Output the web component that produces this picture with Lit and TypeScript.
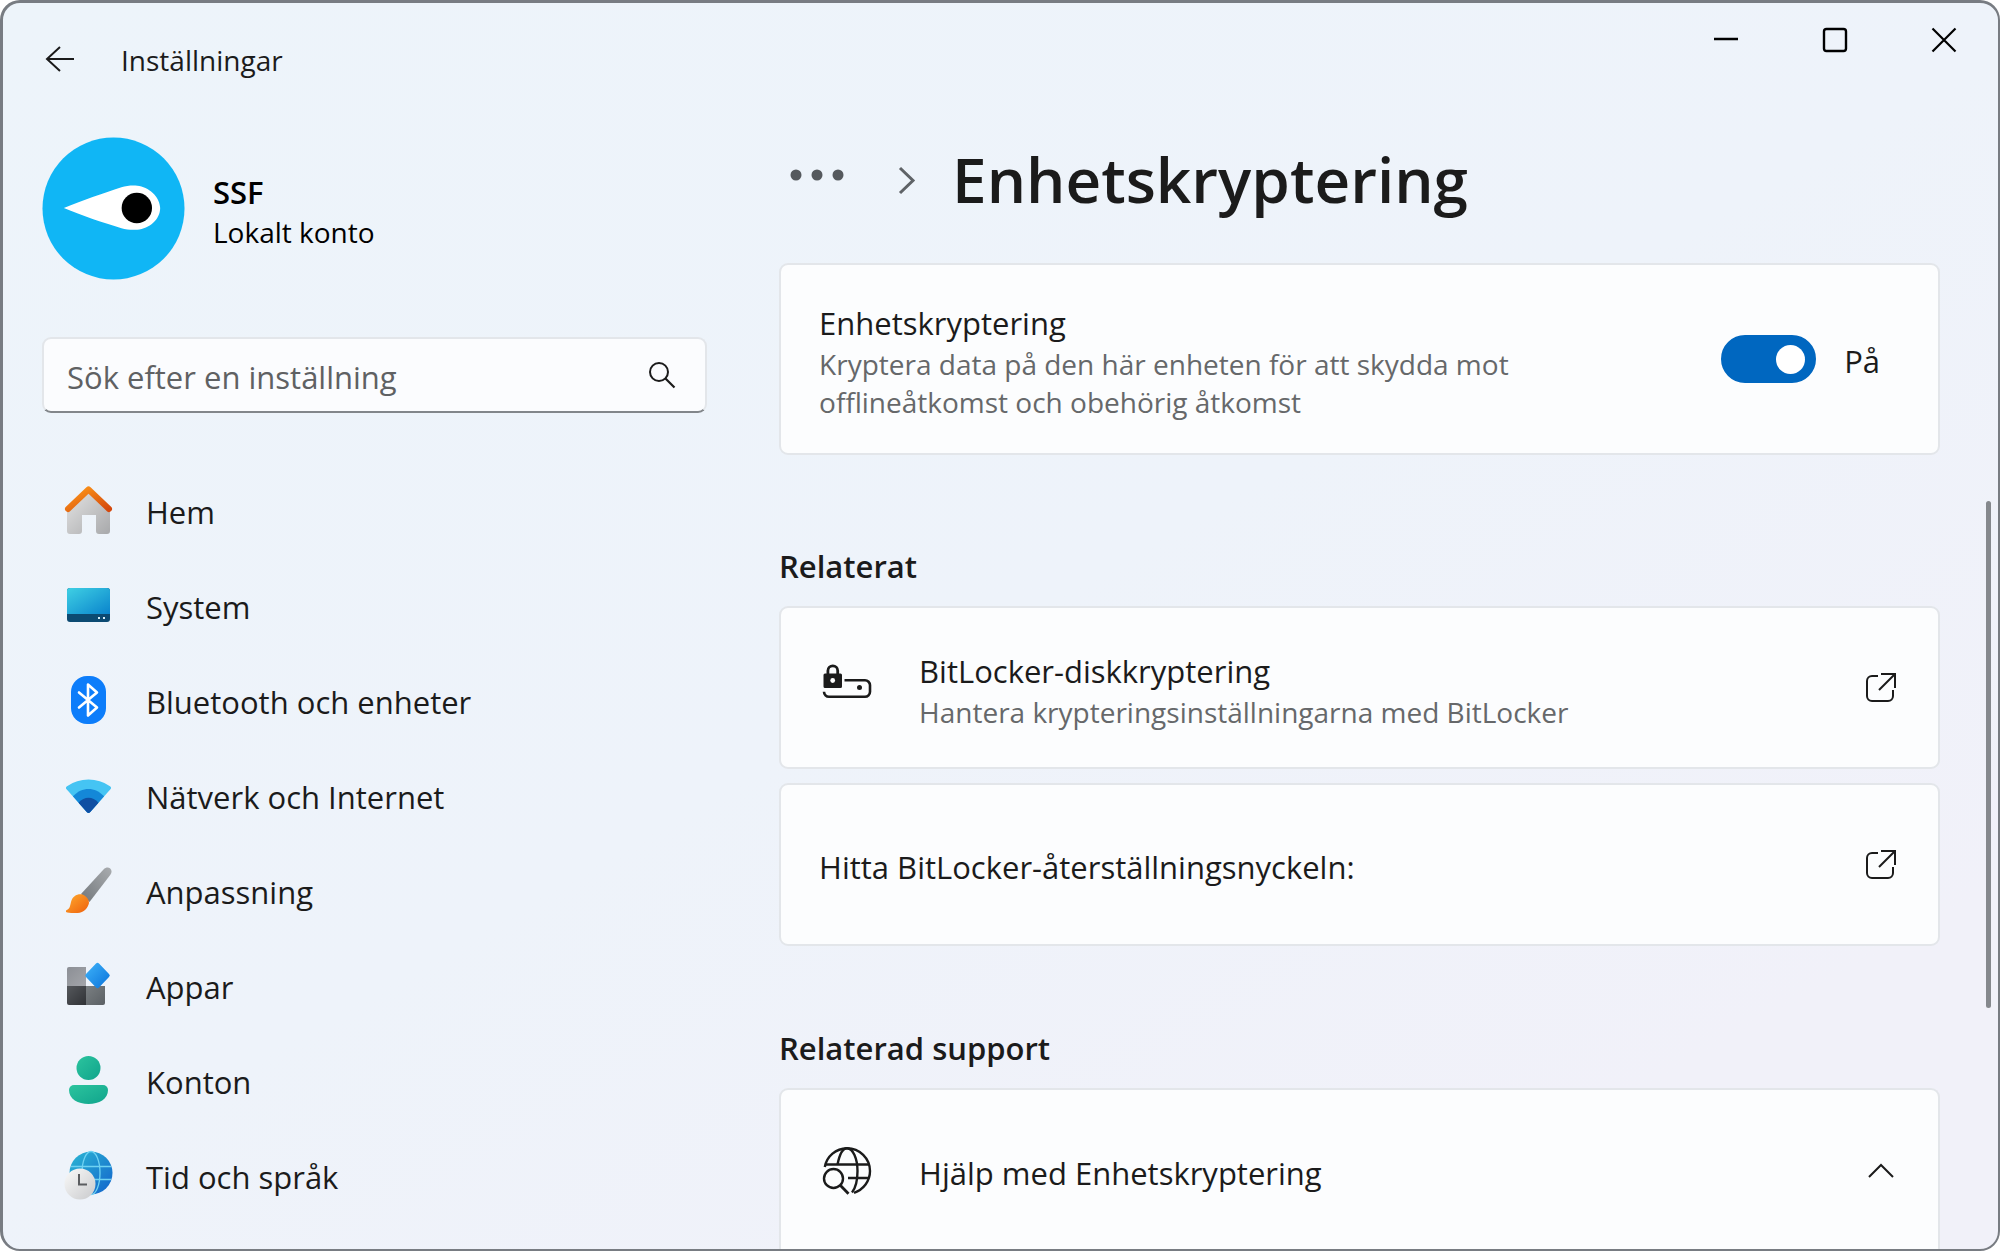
import { LitElement, html, css, svg, TemplateResult } from "lit";
import { customElement, state } from "lit/decorators.js";

interface NavItem {
  id: string;
  label: string;
  icon: TemplateResult;
}

const homeIcon = html`<svg class="icon" viewBox="0 0 48 48" aria-hidden="true">
  <defs>
    <linearGradient id="home-wall" x1="0" y1="0" x2="1" y2="1">
      <stop offset="0" stop-color="#e4e4e4" /><stop offset="1" stop-color="#a8a9ab" />
    </linearGradient>
    <linearGradient id="home-roof" x1="0" y1="0" x2="1" y2="1">
      <stop offset="0" stop-color="#ff9a1a" /><stop offset="1" stop-color="#d4480c" />
    </linearGradient>
  </defs>
  <path d="M24.500 5 3 25v20a3 3 0 0 0 3 3h9a3 3 0 0 0 3-3V29h14v16a3 3 0 0 0 3 3h8a3 3 0 0 0 3-3V25Z" fill="url(#home-wall)" />
  <path d="M4 23 24.500 3.500 45 23" fill="none" stroke="url(#home-roof)" stroke-width="6" stroke-linecap="round" stroke-linejoin="round" />
</svg>`;

const systemIcon = html`<svg class="icon" viewBox="0 0 48 48" aria-hidden="true">
  <defs>
    <linearGradient id="sys-screen" x1="0" y1="0" x2="1" y2="1">
      <stop offset="0" stop-color="#3fd0e4" /><stop offset="1" stop-color="#0a84cc" />
    </linearGradient>
  </defs>
  <rect x="3" y="7" width="43" height="34" rx="3" fill="#0c4a72" />
  <path d="M3 33V10a3 3 0 0 1 3-3h37a3 3 0 0 1 3 3v23Z" fill="url(#sys-screen)" />
  <rect x="34" y="36" width="2" height="2" fill="#d8eef8" />
  <rect x="39" y="36" width="2" height="2" fill="#d8eef8" />
</svg>`;

const bluetoothIcon = html`<svg class="icon" viewBox="0 0 48 48" aria-hidden="true">
  <rect x="7" y="0" width="35" height="48" rx="16" fill="#0d7dfa" />
  <path d="m15 16.500 18 15L24 39.500V8.500l9 8L15 31.500" fill="none" stroke="#fff" stroke-width="2.600" stroke-linejoin="round" stroke-linecap="round" />
</svg>`;

const networkIcon = html`<svg class="icon" viewBox="0 0 48 48" aria-hidden="true">
  <path d="M2.800 18.500c-1.200-1.200-1.200-2.300.2-3.300a38 38 0 0 1 43 0c1.400 1 1.400 2.100.2 3.300L26 41.300a2.200 2.200 0 0 1-3 0Z" fill="#45c4f3" />
  <path d="M8.900 25.300C18 15.500 31 15.500 40.100 25.300L26 41.300a2.200 2.200 0 0 1-3 0Z" fill="#1488d8" />
  <path d="M14.500 31.700c6-6.500 14-6.500 20 0L26 41.300a2.200 2.200 0 0 1-3 0Z" fill="#0f4fa3" />
</svg>`;

const brushIcon = html`<svg class="icon" viewBox="0 0 48 48" aria-hidden="true">
  <defs>
    <linearGradient id="brush-handle" x1="1" y1="0" x2="0" y2="1">
      <stop offset="0" stop-color="#a9acaf" /><stop offset="1" stop-color="#72777b" />
    </linearGradient>
    <linearGradient id="brush-tip" x1="0" y1="0" x2="1" y2="1">
      <stop offset="0" stop-color="#ffab2e" /><stop offset="1" stop-color="#ee5f0c" />
    </linearGradient>
  </defs>
  <path d="M17 28 39.500 3.500C41.500 1.500 44 1 46 2.200c2 1.600 2 4.300.4 6.600L25.500 36Z" fill="url(#brush-handle)" />
  <path d="M2 44.500c4-1.500 4-4.500 5-8.500 1.500-6 6.500-8.500 11.500-7.500 4.500 2 6.500 5 6.500 8.500-1 5-5 9.500-11.500 10C8 47.300 4 47 2 46Z" fill="url(#brush-tip)" />
</svg>`;

const appsIcon = html`<svg class="icon" viewBox="0 0 48 48" aria-hidden="true">
  <defs>
    <linearGradient id="apps-a" x1="0" y1="0" x2="1" y2="1">
      <stop offset="0" stop-color="#8c8f95" /><stop offset="1" stop-color="#a3a5aa" />
    </linearGradient>
    <linearGradient id="apps-b" x1="0" y1="0" x2="1" y2="1">
      <stop offset="0" stop-color="#55585c" /><stop offset="1" stop-color="#303236" />
    </linearGradient>
    <linearGradient id="apps-c" x1="0" y1="0" x2="1" y2="1">
      <stop offset="0" stop-color="#7a7f82" /><stop offset="1" stop-color="#5b6064" />
    </linearGradient>
    <linearGradient id="apps-d" x1="0" y1="0" x2="1" y2="1">
      <stop offset="0" stop-color="#3fb4fa" /><stop offset="1" stop-color="#0a72da" />
    </linearGradient>
  </defs>
  <path d="M3 25V8a2 2 0 0 1 2-2h17v19Z" fill="url(#apps-a)" />
  <path d="M3 25h19v19H5a2 2 0 0 1-2-2Z" fill="url(#apps-b)" />
  <path d="M22 25h19v17a2 2 0 0 1-2 2H22Z" fill="url(#apps-c)" />
  <path d="M32 2.600a2 2 0 0 1 3 0l10 10.500a2 2 0 0 1 0 3L35 26.500a2 2 0 0 1-3 0L22 16.100a2 2 0 0 1 0-3Z" fill="url(#apps-d)" />
</svg>`;

const accountIcon = html`<svg class="icon" viewBox="0 0 48 48" aria-hidden="true">
  <defs>
    <linearGradient id="acc" x1="0" y1="0" x2="1" y2="1">
      <stop offset="0" stop-color="#2cc49e" /><stop offset="1" stop-color="#10a48c" />
    </linearGradient>
  </defs>
  <circle cx="24.500" cy="12" r="12" fill="url(#acc)" />
  <path d="M10 29h29a5 5 0 0 1 5 5c0 9-9 14-19.500 14S5 43 5 34a5 5 0 0 1 5-5Z" fill="url(#acc)" />
</svg>`;

const timeIcon = html`<svg class="icon" viewBox="0 0 48 48" aria-hidden="true">
  <defs>
    <linearGradient id="globe-fill" x1="0" y1="0" x2="1" y2="1">
      <stop offset="0" stop-color="#2cb8d4" /><stop offset="1" stop-color="#1262cc" />
    </linearGradient>
    <linearGradient id="clock-fill" x1="0" y1="0" x2="1" y2="1">
      <stop offset="0" stop-color="#fafafa" /><stop offset="1" stop-color="#c9cacc" />
    </linearGradient>
  </defs>
  <circle cx="27" cy="22" r="21.500" fill="url(#globe-fill)" />
  <g fill="none" stroke="#6fd2f2" stroke-width="1.300">
    <ellipse cx="27" cy="22" rx="9" ry="21.500" />
    <path d="M7 15.500h40M7 28.500h40" />
  </g>
  <circle cx="16" cy="33" r="15.500" fill="url(#clock-fill)" />
  <path d="M15 23V33.500h8" fill="none" stroke="#5b5d60" stroke-width="2" />
</svg>`;

const NAV: NavItem[] = [
  { id: "hem", label: "Hem", icon: homeIcon },
  { id: "system", label: "System", icon: systemIcon },
  { id: "bluetooth", label: "Bluetooth och enheter", icon: bluetoothIcon },
  { id: "natverk", label: "Nätverk och Internet", icon: networkIcon },
  { id: "anpassning", label: "Anpassning", icon: brushIcon },
  { id: "appar", label: "Appar", icon: appsIcon },
  { id: "konton", label: "Konton", icon: accountIcon },
  { id: "tid", label: "Tid och språk", icon: timeIcon },
];

const externalIcon = html`<svg class="external" viewBox="0 0 30 30" aria-hidden="true">
  <g fill="none" stroke="#1b1b1b" stroke-width="2">
    <path d="M12 3H6a5 5 0 0 0-5 5v15a5 5 0 0 0 5 5h16a5 5 0 0 0 5-5v-6" />
    <path d="M15 1h14v14M29 1 13 17" />
  </g>
</svg>`;

const driveLockIcon = html`<svg class="icon" viewBox="0 0 48 48" aria-hidden="true">
  <path d="M4.900 11V6.800a4.900 4.900 0 0 1 9.800 0V11" fill="none" stroke="#1b1b1b" stroke-width="2.800" />
  <path d="M2 9.500h15.500A1.500 1.500 0 0 1 19 11v11.500a1.500 1.500 0 0 1-1.500 1.500H2a1.500 1.500 0 0 1-1.500-1.500V11A1.500 1.500 0 0 1 2 9.500Z" fill="#1b1b1b" />
  <circle cx="9.700" cy="16.500" r="2.400" fill="#fff" />
  <path d="M21.500 16.300h20.500a5 5 0 0 1 5 5v6.500a5 5 0 0 1-5 5H6a5 5 0 0 1-5-5" fill="none" stroke="#1b1b1b" stroke-width="2.600" />
  <circle cx="36.500" cy="23.500" r="2.500" fill="#1b1b1b" />
</svg>`;

const globeSearchIcon = html`<svg class="icon" viewBox="0 0 48 48" aria-hidden="true">
  <g fill="none" stroke="#1b1b1b" stroke-width="2.400">
    <path d="M1.800 20A23 22.600 0 0 1 24 1.200a23 23 0 0 1 23 22.800c0 10-6.500 18.500-16 21.800" />
    <path d="M14.500 17.500C16.500 7.500 20 1.200 24 1.200c6 0 10.500 10.500 10.500 22.800 0 9-2 17-5.500 21.500" />
    <path d="M3 17.500h42M25 31h20" />
    <circle cx="10.500" cy="31.500" r="9.500" />
    <path d="m17 38 8.500 8.800" stroke-width="2.800" />
  </g>
</svg>`;

@customElement("app-root")
export class AppRoot extends LitElement {
  static styles = css`
    :host {
      display: block;
      color: #1b1b1b;
      font-family: "Open Sans", "Noto Sans", sans-serif;
      font-size: 31px;
      line-height: 44px;
      background: #fff;
    }
    * {
      box-sizing: border-box;
    }
    a {
      color: inherit;
      text-decoration: none;
    }
    button,
    input {
      font: inherit;
      color: inherit;
      margin: 0;
    }
    button {
      border: 0;
      padding: 0;
      background: none;
    }
    svg {
      display: block;
      flex: none;
      overflow: visible;
    }
    .window {
      position: relative;
      display: flex;
      flex-direction: column;
      height: 100vh;
      overflow: hidden;
      border: solid #787c82;
      border-width: 3px 2px 2px 3px;
      border-radius: 20px;
      background: linear-gradient(150deg, #edf4fa 0%, #eef3fa 50%, #f1f1f9 85%, #f1f1f9 100%);
    }
    .titlebar {
      display: flex;
      flex: none;
      justify-content: space-between;
      align-items: flex-start;
      height: 112px;
    }
    .app-title {
      display: flex;
      align-items: center;
      gap: 46px;
      height: 112px;
      padding-left: 42px;
      font-size: 28px;
    }
    .app-title span {
      padding-top: 2px;
    }
    .back svg {
      width: 30px;
      height: 26px;
    }
    .captions {
      display: flex;
    }
    .captions button {
      display: grid;
      place-items: center;
      width: 109px;
      height: 74px;
    }
    .captions svg {
      width: 24px;
      height: 24px;
    }
    .body {
      display: grid;
      flex: 1;
      grid-template-columns: 389fr 611fr;
      min-height: 0;
    }
    .sidebar {
      padding: 22px 72px 0 39px;
    }
    .profile {
      display: flex;
      align-items: center;
      gap: 28px;
    }
    .avatar {
      width: 143px;
      height: 143px;
    }
    .profile-text {
      padding-top: 6px;
      line-height: 40px;
      color: #000;
    }
    .name {
      font-weight: 600;
    }
    .account {
      font-size: 28px;
    }
    .search {
      display: flex;
      align-items: center;
      height: 76px;
      margin-top: 57px;
      padding: 0 30px 0 23px;
      border: 2px solid #e3e6ea;
      border-bottom-color: #82868a;
      border-radius: 9px;
      background: #fbfcfe;
    }
    .search input {
      flex: 1;
      min-width: 0;
      padding: 4px 0 0;
      border: 0;
      outline: 0;
      background: none;
    }
    .search input::placeholder {
      color: #5f6163;
      opacity: 1;
    }
    .search svg {
      width: 26px;
      height: 26px;
    }
    .nav {
      display: flex;
      flex-direction: column;
      margin-top: 49px;
    }
    .nav a {
      display: flex;
      align-items: center;
      gap: 34px;
      height: 95px;
      padding-left: 22px;
    }
    .icon {
      width: 48px;
      height: 48px;
    }
    .nav span {
      padding-top: 4px;
    }
    .main {
      min-height: 0;
      overflow: hidden;
      padding: 24px 58px 0 0;
    }
    .crumbs {
      display: flex;
      align-items: center;
      padding-left: 11px;
    }
    .crumbs .dots {
      width: 54px;
      height: 24px;
    }
    .crumbs .arrow {
      width: 18px;
      height: 28px;
      margin: 0 36px 0 54px;
    }
    h1 {
      margin: 0;
      font-size: 62px;
      line-height: 80px;
      font-weight: 600;
    }
    h2 {
      margin: 80px 0 18px;
      font-size: 31px;
      line-height: 44px;
      font-weight: 600;
    }
    .card {
      display: flex;
      align-items: center;
      width: 100%;
      min-height: 163px;
      padding: 0 42px 0 38px;
      border: 2px solid #e3e6ea;
      border-radius: 9px;
      background: #fcfdfe;
      text-align: left;
    }
    .card .icon {
      margin: 0 48px 0 4px;
    }
    .card.setting {
      min-height: 192px;
      margin: 44px 0 89px;
      padding-right: 58px;
    }
    .card + .card {
      margin-top: 14px;
    }
    .text {
      display: flex;
      flex: 1;
      flex-direction: column;
      min-width: 0;
      padding-top: 4px;
    }
    .desc {
      max-width: 740px;
      font-size: 28px;
      line-height: 38px;
      color: #66686a;
    }
    .external {
      width: 30px;
      height: 30px;
    }
    .switch {
      display: flex;
      align-items: center;
      gap: 28px;
    }
    .switch input {
      display: flex;
      align-items: center;
      justify-content: flex-start;
      width: 95px;
      height: 48px;
      padding: 0 9px;
      appearance: none;
      border: 2px solid #0067c0;
      border-radius: 24px;
      background: #fff;
    }
    .switch input::before {
      content: "";
      width: 29px;
      height: 29px;
      border-radius: 50%;
      background: #0067c0;
    }
    .switch input:checked {
      justify-content: flex-end;
      background: #0067c0;
    }
    .switch input:checked::before {
      background: #fff;
    }
    .switch span {
      padding-top: 4px;
    }
    .expander {
      border-bottom-left-radius: 0;
      border-bottom-right-radius: 0;
      border-bottom: 0;
    }
    .expander .chevron {
      width: 26px;
      height: 14px;
      margin-right: 2px;
    }
    .expander-body {
      min-height: 163px;
      border: 2px solid #e3e6ea;
      background: #fcfdfe;
    }
    .first-heading {
      margin-top: 0;
    }
    .scrollbar {
      position: absolute;
      top: 40%;
      right: 7px;
      width: 5px;
      height: 507px;
      border-radius: 3px;
      background: #85888d;
    }
  `;

  @state() private encrypted = true;
  @state() private helpOpen = true;

  render() {
    return html`
      <div class="window">
        <header class="titlebar">
          <div class="app-title">
            <button class="back" aria-label="Tillbaka">
              <svg viewBox="0 0 30 26">
                <path d="M29 13H2M15 1 2 13l13 12" fill="none" stroke="#1b1b1b" stroke-width="2" />
              </svg>
            </button>
            <span>Inställningar</span>
          </div>
          <div class="captions">
            <button aria-label="Minimera">
              <svg viewBox="0 0 24 24"><path d="M0 11h24" stroke="#000" stroke-width="2.400" /></svg>
            </button>
            <button aria-label="Maximera">
              <svg viewBox="0 0 24 24"><rect x="1" y="1" width="22" height="22" rx="2.500" fill="none" stroke="#000" stroke-width="2.400" /></svg>
            </button>
            <button aria-label="Stäng">
              <svg viewBox="0 0 24 24"><path d="m.5.5 23 23m0-23-23 23" stroke="#000" stroke-width="2.200" /></svg>
            </button>
          </div>
        </header>
        <div class="body">
          <aside class="sidebar">
            <div class="profile">
              <svg class="avatar" viewBox="0 0 144 144" aria-hidden="true">
                <circle cx="72" cy="72" r="71.500" fill="#10b6f5" />
                <path d="M22 71.500C40 64 62 56.500 80 50.500c5-1.500 11-2 16-1.500 11 1 23 11 23 22.500S108 92.500 96 93.300c-5 .5-11 0-16-1.500C62 86.500 40 79 22 71.500Z" fill="#fff" />
                <circle cx="95.500" cy="71.500" r="15.300" fill="#000" />
              </svg>
              <div class="profile-text">
                <div class="name">SSF</div>
                <div class="account">Lokalt konto</div>
              </div>
            </div>
            <div class="search">
              <input type="text" aria-label="Sök efter en inställning" placeholder="Sök efter en inställning" />
              <svg viewBox="0 0 26 26" aria-hidden="true">
                <circle cx="10" cy="10" r="9" fill="none" stroke="#1b1b1b" stroke-width="2" />
                <path d="m16.500 16.500 9 9" stroke="#1b1b1b" stroke-width="2.200" />
              </svg>
            </div>
            <nav class="nav">
              ${NAV.map((item) => html`<a href="#${item.id}">${item.icon}<span>${item.label}</span></a>`)}
            </nav>
          </aside>
          <main class="main">
            <div class="crumbs">
              <button aria-label="Fler nivåer">
                <svg class="dots" viewBox="0 0 54 24">
                  ${[6, 27, 48].map((cx) => svg`<circle cx=${cx} cy="8" r="5.500" fill="#55595d" />`)}
                </svg>
              </button>
              <svg class="arrow" viewBox="0 0 18 28" aria-hidden="true">
                <path d="m2 3 13 12.500L2 28" fill="none" stroke="#5f6367" stroke-width="3" />
              </svg>
              <h1>Enhetskryptering</h1>
            </div>
            <section class="card setting">
              <div class="text">
                <span id="enc-title">Enhetskryptering</span>
                <span class="desc">Kryptera data på den här enheten för att skydda mot offlineåtkomst och obehörig åtkomst</span>
              </div>
              <label class="switch">
                <input
                  type="checkbox"
                  role="switch"
                  aria-labelledby="enc-title"
                  .checked=${this.encrypted}
                  @change=${(e: Event) => (this.encrypted = (e.target as HTMLInputElement).checked)}
                />
                <span>${this.encrypted ? "På" : "Av"}</span>
              </label>
            </section>
            <h2 class="first-heading">Relaterat</h2>
            <a class="card" href="#bitlocker">
              ${driveLockIcon}
              <div class="text">
                <span>BitLocker-diskkryptering</span>
                <span class="desc">Hantera krypteringsinställningarna med BitLocker</span>
              </div>
              ${externalIcon}
            </a>
            <a class="card" href="#nyckel">
              <div class="text"><span>Hitta BitLocker-återställningsnyckeln:</span></div>
              ${externalIcon}
            </a>
            <h2>Relaterad support</h2>
            <button
              class="card expander"
              aria-expanded=${this.helpOpen ? "true" : "false"}
              @click=${() => (this.helpOpen = !this.helpOpen)}
            >
              ${globeSearchIcon}
              <span class="text">Hjälp med Enhetskryptering</span>
              <svg class="chevron" viewBox="0 0 26 14" aria-hidden="true">
                <path d="M1 13 13 1l12 12" fill="none" stroke="#1b1b1b" stroke-width="2" />
              </svg>
            </button>
            ${this.helpOpen ? html`<div class="expander-body"></div>` : ""}
          </main>
        </div>
        <div class="scrollbar"></div>
      </div>
    `;
  }
}
